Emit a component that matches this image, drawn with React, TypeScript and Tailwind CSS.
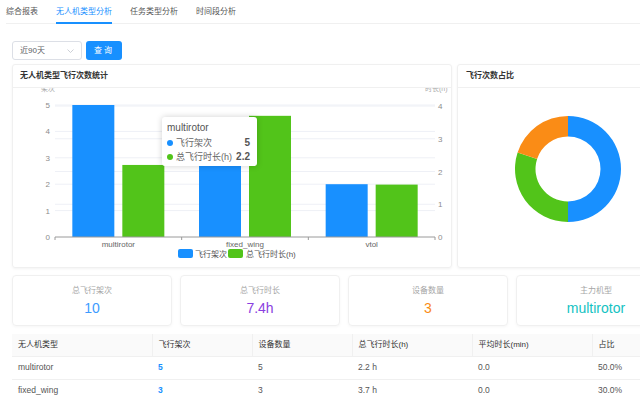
const tabs = ["综合报表", "无人机类型分析", "任务类型分析", "时间段分析"];

const bars = [
  { name: "multirotor", count: 5, hours: 2.2 },
  { name: "fixed_wing", count: 3, hours: 3.7 },
  { name: "vtol", count: 2, hours: 1.6 },
];

const stats = [
  { label: "总飞行架次", value: "10", color: "text-[#3d9bff]" },
  { label: "总飞行时长", value: "7.4h", color: "text-[#8a3ee0]" },
  { label: "设备数量", value: "3", color: "text-[#fa8c16]" },
  { label: "主力机型", value: "multirotor", color: "text-[#13c2c2]" },
];

const rows = [
  { type: "multirotor", count: 5, devices: 5, hours: "2.2 h", avg: "0.0", pct: "50.0%" },
  { type: "fixed_wing", count: 3, devices: 3, hours: "3.7 h", avg: "0.0", pct: "30.0%" },
  { type: "vtol", count: 2, devices: 2, hours: "1.5 h", avg: "0.0", pct: "20.0%" },
];

// plot geometry, in svg coords of the left card body
const X0 = 42;
const X1 = 422;
const BASE = 149;
const LEFT_UNIT = 26.4;
const RIGHT_UNIT = 32.75;

function BarChart() {
  const cat = (X1 - X0) / 3;
  return (
    <svg width="440" height="180" className="block">
      <text x="28" y="3" fontSize="7" fill="#aaa">架次</text>
      <text x="412" y="3" fontSize="7" fill="#aaa">时长(h)</text>
      {[0, 1, 2, 3, 4, 5].map((v) => (
        <g key={"l" + v}>
          {v > 0 && <line x1={X0} x2={X1} y1={BASE - v * LEFT_UNIT} y2={BASE - v * LEFT_UNIT} stroke="#eef0f6" />}
          <text x="37" y={BASE - v * LEFT_UNIT + 3} fontSize="8" fill="#8c8c8c" textAnchor="end">{v}</text>
        </g>
      ))}
      {[0, 1, 2, 3, 4].map((v) => (
        <g key={"r" + v}>
          {v > 0 && <line x1={X0} x2={X1} y1={BASE - v * RIGHT_UNIT} y2={BASE - v * RIGHT_UNIT} stroke="#eef0f6" />}
          <text x="425" y={BASE - v * RIGHT_UNIT + 3} fontSize="8" fill="#8c8c8c">{v}</text>
        </g>
      ))}
      {bars.map((b, i) => {
        const c = X0 + cat * i + cat / 2;
        const hb = b.count * LEFT_UNIT;
        const hg = b.hours * RIGHT_UNIT;
        return (
          <g key={b.name}>
            <rect x={c - 46} y={BASE - hb} width="42" height={hb} fill="#1890ff" />
            <rect x={c + 4} y={BASE - hg} width="42" height={hg} fill="#52c41a" />
            <text x={c} y={BASE + 10} fontSize="8" fill="#666" textAnchor="middle">{b.name}</text>
          </g>
        );
      })}
      <line x1={X0} x2={X1} y1={BASE} y2={BASE} stroke="#9a9a9a" />
      {[0, 1, 2, 3].map((i) => (
        <line key={i} x1={X0 + cat * i} x2={X0 + cat * i} y1={BASE} y2={BASE + 3} stroke="#9a9a9a" />
      ))}
      <rect x="165" y="161" width="15" height="9" rx="2" fill="#1890ff" />
      <text x="182" y="168.5" fontSize="8" fill="#555">飞行架次</text>
      <rect x="215" y="161" width="15" height="9" rx="2" fill="#52c41a" />
      <text x="233" y="168.5" fontSize="8" fill="#555">总飞行时长(h)</text>
    </svg>
  );
}

function arc(cx: number, cy: number, ro: number, ri: number, a0: number, a1: number) {
  const p = (r: number, a: number) => {
    const t = (a * Math.PI) / 180;
    return `${cx + r * Math.sin(t)} ${cy - r * Math.cos(t)}`;
  };
  const large = a1 - a0 > 180 ? 1 : 0;
  return `M ${p(ro, a0)} A ${ro} ${ro} 0 ${large} 1 ${p(ro, a1)} L ${p(ri, a1)} A ${ri} ${ri} 0 ${large} 0 ${p(ri, a0)} Z`;
}

function Donut() {
  return (
    <svg width="220" height="180" className="block">
      <path d={arc(110, 81, 53, 32.5, 0, 180)} fill="#1890ff" />
      <path d={arc(110, 81, 53, 32.5, 180, 288)} fill="#52c41a" />
      <path d={arc(110, 81, 53, 32.5, 288, 360)} fill="#fa8c16" />
    </svg>
  );
}

export default function App() {
  return (
    <div className="w-[640px] h-[400px] overflow-hidden bg-white font-['Liberation_Sans','Noto_Sans_CJK_SC',sans-serif] text-[#333]">
      <div className="w-[690px]">
        <div className="mx-[6px] flex gap-[18px] h-[24px] border-b border-[#f0f0f0]">
          {tabs.map((t, i) => (
            <div
              key={t}
              className={
                i === 1
                  ? "h-[24px] flex items-center text-[8px] text-[#1890ff] border-b-2 border-[#1890ff] pt-[1px]"
                  : "h-[24px] flex items-center text-[8px] text-[#555] pb-[1px]"
              }
            >
              {t}
            </div>
          ))}
        </div>

        <div className="mt-[17px] ml-[12px] flex gap-[4px]">
          <div className="w-[70px] h-[19px] border border-[#dcdfe6] rounded-[3px] flex items-center justify-between px-[7px]">
            <span className="text-[8px] text-[#606266]">近90天</span>
            <svg width="7" height="4" viewBox="0 0 7 4">
              <path d="M0.5 0.5 L3.5 3.5 L6.5 0.5" fill="none" stroke="#c0c4cc" strokeWidth="0.8" />
            </svg>
          </div>
          <div className="w-[36px] h-[19px] bg-[#1890ff] rounded-[3px] flex items-center justify-center text-white text-[8px] tracking-[2px]">
            查询
          </div>
        </div>

        <div className="mt-[4px] mx-[12px] flex gap-[5px]">
          <div className="w-[440px] h-[204px] border border-[#f0f0f0] rounded-[3px] shadow-[0_1px_3px_rgba(0,0,0,0.05)]">
            <div className="h-[23px] px-[7px] flex items-center border-b border-[#f0f0f0] text-[8px] font-bold text-[#333]">
              无人机类型飞行次数统计
            </div>
            <div className="relative">
              <BarChart />
              <div className="absolute left-[149px] top-[29px] w-[95px] bg-white rounded-[3px] shadow-[0_0_6px_rgba(0,0,0,0.18)] pl-[5px] pr-[7px] pt-[5px] pb-[2px]">
                <div className="text-[10px] leading-[12px] text-[#555]">multirotor</div>
                <div className="mt-[2px] flex items-center leading-[14px]">
                  <span className="w-[6px] h-[6px] rounded-full bg-[#1890ff] mr-[3px]" />
                  <span className="text-[9px] text-[#666]">飞行架次</span>
                  <span className="ml-auto text-[10px] font-bold text-[#555]">5</span>
                </div>
                <div className="flex items-center leading-[14px]">
                  <span className="w-[6px] h-[6px] rounded-full bg-[#52c41a] mr-[3px]" />
                  <span className="text-[9px] text-[#666]">总飞行时长(h)</span>
                  <span className="ml-auto text-[10px] font-bold text-[#555]">2.2</span>
                </div>
              </div>
            </div>
          </div>
          <div className="w-[220px] h-[204px] border border-[#f0f0f0] rounded-[3px] shadow-[0_1px_3px_rgba(0,0,0,0.05)]">
            <div className="h-[23px] px-[8px] flex items-center border-b border-[#f0f0f0] text-[8px] font-bold text-[#333]">
              飞行次数占比
            </div>
            <Donut />
          </div>
        </div>

        <div className="mt-[7px] mx-[12px] grid grid-cols-[160px_160px_160px_160px] gap-[8px]">
          {stats.map((s) => (
            <div
              key={s.label}
              className="h-[51px] border border-[#f0f0f0] rounded-[4px] shadow-[0_1px_3px_rgba(0,0,0,0.04)] flex flex-col items-center pt-[10px]"
            >
              <div className="text-[8px] leading-[10px] text-[#a6a6a6]">{s.label}</div>
              <div className={"mt-[4px] text-[14px] leading-[16px] " + s.color}>{s.value}</div>
            </div>
          ))}
        </div>

        <table className="mt-[8px] ml-[12px] w-[664px] table-fixed border-collapse text-left">
          <colgroup>
            <col className="w-[140px]" />
            <col className="w-[100px]" />
            <col className="w-[100px]" />
            <col className="w-[120px]" />
            <col className="w-[120px]" />
            <col className="w-[84px]" />
          </colgroup>
          <thead>
            <tr className="bg-[#fafafa] border-b border-[#f0f0f0]">
              {["无人机类型", "飞行架次", "设备数量", "总飞行时长(h)", "平均时长(min)", "占比"].map((h, i) => (
                <th
                  key={h}
                  className={
                    "h-[22px] px-[6px] text-[8px] font-normal text-[#333] " +
                    (i > 0 ? "border-l border-[#f0f0f0]" : "")
                  }
                >
                  {h}
                </th>
              ))}
            </tr>
          </thead>
          <tbody>
            {rows.map((r) => (
              <tr key={r.type} className="border-b border-[#f0f0f0] text-[8.5px] text-[#555]">
                <td className="h-[23px] px-[6px]">{r.type}</td>
                <td className="px-[6px] text-[#1890ff] font-bold">{r.count}</td>
                <td className="px-[6px]">{r.devices}</td>
                <td className="px-[6px]">{r.hours}</td>
                <td className="px-[6px]">{r.avg}</td>
                <td className="px-[6px]">{r.pct}</td>
              </tr>
            ))}
          </tbody>
        </table>
      </div>
    </div>
  );
}
